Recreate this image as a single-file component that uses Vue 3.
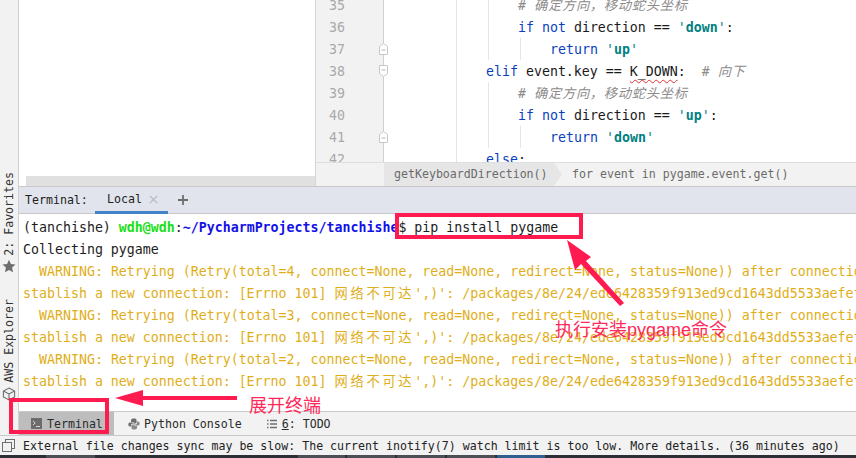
<script setup>
const warnTail = ", connect=None, read=None, redirect=None, status=None)) after connection broken by"
const pathTail = ",)': /packages/8e/24/ede6428359f913ed9cd1643dd5533aefef8e7cf4"
const retries = [4, 3, 2]
const numbers = [35, 36, 37, 38, 39, 40, 41, 42]
const foldUp = [37, 41]
const foldDown = [38]
const guides = [
  { cls: 'g1', top: 0, height: 162 },
  { cls: 'g2', top: 0, height: 60 },
  { cls: 'g2', top: 82, height: 66 },
  { cls: 'g3', top: 38, height: 22 },
  { cls: 'g3', top: 126, height: 22 }
]
const segments = [
  { w: 49, m: 46, blue: false },
  { w: 47, m: 203, blue: false },
  { w: 48, m: 2, blue: false },
  { w: 48, m: 2, blue: false },
  { w: 48, m: 2, blue: false },
  { w: 48, m: 2, blue: true }
]
</script>

<template>
  <div class="ide">
    <div class="work">
      <aside class="strip">
        <span class="vtext fav">2: Favorites</span>
        <svg class="star" width="14" height="14" viewBox="0 0 14 14"><path d="M7 .8l1.900 4.200 4.600.5-3.400 3.100.9 4.600L7 10.900l-4 2.300.9-4.600L.5 5.500l4.600-.5z" fill="#6e6e6e"/></svg>
        <span class="vtext aws">AWS Explorer</span>
        <svg class="cube" width="14" height="14" viewBox="0 0 14 14" fill="none" stroke="#6e6e6e" stroke-width="1.100"><path d="M7 1l5.600 3v6L7 13l-5.600-3V4zM1.400 4L7 7l5.600-3M7 7v6"/></svg>
      </aside>

      <main class="center">
        <section class="editor">
          <div class="blank"><div class="hscroll"></div></div>
          <div class="pane">
            <div class="rows">
              <div class="gutter">
                <div v-for="n in numbers" :key="n" class="num">
                  {{ n }}
                  <svg v-if="foldUp.includes(n)" class="fold" width="9" height="12" viewBox="0 0 9 12"><path d="M.5 11.500v-8l4-3 4 3v8z" fill="#fff" stroke="#c8c8c8"/><path d="M2.500 7h4" stroke="#b5b5b5"/></svg>
                  <svg v-if="foldDown.includes(n)" class="fold" width="9" height="12" viewBox="0 0 9 12"><path d="M.5.5v8l4 3 4-3v-8z" fill="#fff" stroke="#c8c8c8"/><path d="M2.500 5h4" stroke="#b5b5b5"/></svg>
                </div>
              </div>
              <div class="code">
                <span v-for="(g, i) in guides" :key="i" class="guide" :class="g.cls" :style="{ top: g.top + 'px', height: g.height + 'px' }"></span>
                <div class="line i16"><span class="com"># <span class="cjk">确定方向，移动蛇头坐标</span></span></div>
                <div class="line i16"><span class="kw">if not</span> direction == <span class="q">'</span><span class="str">down</span><span class="q">'</span>:</div>
                <div class="line i20"><span class="kw">return</span> <span class="q">'</span><span class="str">up</span><span class="q">'</span></div>
                <div class="line i12"><span class="kw">elif</span> event.key == <span class="squig">K_DOWN</span>:{{ '  ' }}<span class="com"># <span class="cjk">向下</span></span></div>
                <div class="line i16"><span class="com"># <span class="cjk">确定方向，移动蛇头坐标</span></span></div>
                <div class="line i16"><span class="kw">if not</span> direction == <span class="q">'</span><span class="str">up</span><span class="q">'</span>:</div>
                <div class="line i20"><span class="kw">return</span> <span class="q">'</span><span class="str">down</span><span class="q">'</span></div>
                <div class="line i12"><span class="kw">else</span>:</div>
              </div>
            </div>
            <div class="crumbs">
              <div class="crumb-gap"></div>
              <div class="crumb active">getKeyboardDirection()</div>
              <div class="crumb">for event in pygame.event.get()</div>
            </div>
          </div>
        </section>

        <section class="terminal">
          <header class="term-head">
            <span class="term-label">Terminal:</span>
            <span class="term-tab">Local
              <svg width="9" height="9" viewBox="0 0 9 9"><path d="M.8.8l7.400 7.400M8.200.8L.8 8.200" stroke="#b4b8be" stroke-width="1.200"/></svg>
            </span>
            <svg class="plus" width="10" height="10" viewBox="0 0 10 10"><path d="M5 0v10M0 5h10" stroke="#6e6e6e" stroke-width="1.800"/></svg>
          </header>
          <div class="term-body">
            <div class="tline">(tanchishe) <b class="user">wdh@wdh</b>:<b class="path">~/PycharmProjects/tanchishe</b>$ pip install pygame</div>
            <div class="tline">Collecting pygame</div>
            <template v-for="r in retries" :key="r">
              <div class="tline warn indent">WARNING: Retrying (Retry(total={{ r }}{{ warnTail }}</div>
              <div class="tline warn">stablish a new connection: [Errno 101] <span class="tcjk">网络不可达</span>'{{ pathTail }}</div>
            </template>
          </div>
        </section>

        <nav class="tools">
          <div class="tool on">
            <svg width="11" height="11" viewBox="0 0 11 11"><rect width="11" height="11" fill="#6c6c6c"/><path d="M2 3l2.200 2L2 7M5 8.500h4" stroke="#d8d8d8" fill="none"/></svg>
            Terminal
          </div>
          <div class="tool py">
            <svg width="12" height="12" viewBox="0 0 12 12"><path d="M6 .5c-2 0-3 .6-3 1.800V4h3.200v.6H1.900C.8 4.600.3 5.500.3 6.600S.9 8.600 2 8.600h1V7.200c0-1 .8-1.800 1.800-1.800h2.400c.8 0 1.400-.6 1.400-1.400V2.300C8.600 1.100 7.800.5 6 .5z" fill="#6e6e6e"/><path d="M6 11.500c2 0 3-.6 3-1.800V8H5.800v-.6h4.300c1.100 0 1.600-.9 1.600-2s-.6-2-1.700-2H9v1.400c0 1-.8 1.800-1.800 1.800H4.800c-.8 0-1.400.6-1.400 1.400v1.700c0 1.200.8 1.800 2.600 1.800z" fill="#8a8a8a"/></svg>
            Python Console
          </div>
          <div class="tool todo">
            <svg width="10" height="10" viewBox="0 0 10 10"><path d="M0 1.500h1.500M3 1.500h7M0 5h1.500M3 5h7M0 8.500h1.500M3 8.500h7" stroke="#6e6e6e" stroke-width="1.400"/></svg>
            <span><u>6</u>: TODO</span>
          </div>
        </nav>
      </main>
    </div>

    <footer class="status">
      <svg width="13" height="13" viewBox="0 0 13 13" fill="#f2f2f2" stroke="#6e6e6e"><rect x="3.500" y=".5" width="9" height="9"/><rect x=".5" y="3.500" width="9" height="9"/></svg>
      <span>External file changes sync may be slow: The current inotify(7) watch limit is too low. More details. (36 minutes ago)</span>
    </footer>
    <div class="taskbar">
      <i v-for="(s, i) in segments" :key="i" class="seg" :class="{ blue: s.blue }" :style="{ width: s.w + 'px', marginLeft: s.m + 'px' }"></i>
    </div>

    <div class="mark mark-cmd"></div>
    <div class="mark mark-tab"></div>
    <svg class="arrows" width="856" height="458" viewBox="0 0 856 458">
      <path d="M567 240l24 17-5 4 38 42-4 3-39-42-6 6z" fill="#ff1a4f"/>
      <path d="M115 398l28-8v6h94v4h-94v6z" fill="#ff1a4f"/>
    </svg>
    <span class="note note-cmd">执行安装pygame命令</span>
    <span class="note note-tab">展开终端</span>
  </div>
</template>

<style scoped>
.ide {
  position: relative;
  width: 856px;
  height: 458px;
  overflow: hidden;
  display: flex;
  flex-direction: column;
  background: #fff;
  font-family: "DejaVu Sans Mono", "Noto Sans CJK SC", monospace;
  color: #1d1d1d;
}
.work { flex: 1; min-height: 0; display: flex; }
.strip {
  width: 18px;
  flex: none;
  background: #f2f2f2;
  border-right: 1px solid #d0d0d0;
  display: flex;
  flex-direction: column;
  align-items: center;
  padding-top: 172px;
}
.vtext {
  writing-mode: vertical-rl;
  transform: rotate(180deg);
  font-size: 11.600px;
  line-height: 14px;
  color: #333;
  white-space: nowrap;
}
.star { margin-top: 3px; }
.aws { margin-top: 26px; }
.cube { margin-top: 4px; }
.center { flex: 1; min-width: 0; display: flex; flex-direction: column; }

.editor { height: 186px; flex: none; display: flex; }
.blank {
  width: 289px;
  flex: none;
  border-right: 1px solid #d6d6d6;
  display: flex;
  align-items: flex-end;
  padding-left: 7px;
}
.hscroll { flex: 1; height: 10px; background: #e0e0e0; }
.pane { flex: 1; min-width: 0; display: flex; flex-direction: column; }
.rows { height: 162px; flex: none; display: flex; overflow: hidden; }
.gutter {
  width: 68px;
  flex: none;
  background: #f2f2f2;
  border-right: 1px solid #d0d0d0;
  padding-left: 13px;
  box-sizing: border-box;
}
.num, .line {
  height: 22px;
  line-height: 22px;
  font-size: 13.280px;
  white-space: pre;
}
.num { position: relative; color: #a9a9a9; top: -5px; }
.fold { position: absolute; left: 50px; top: 4px; }
.code { position: relative; flex: 1; min-width: 0; padding-left: 6px; color: #1a1a1a; }
.line { position: relative; top: -5px; }
.i12 { padding-left: 96px; }
.i16 { padding-left: 128px; }
.i20 { padding-left: 160px; }
.guide { position: absolute; width: 1px; background: #e6e6e6; }
.g1 { left: 72px; }
.g2 { left: 104px; }
.g3 { left: 136px; }
.kw { color: #0a3fbf; }
.str { color: #00807f; font-weight: 600; }
.q { color: #00807f; }
.com { color: #8c8c8c; font-style: italic; }
.cjk { letter-spacing: 0.700px; }
.squig {
  text-decoration: underline wavy #e53333 1px;
  text-decoration-skip-ink: none;
  text-underline-offset: 3px;
}

.crumbs {
  height: 24px;
  flex: none;
  display: flex;
  background: #f2f2f2;
  border-top: 1px solid #dedede;
  box-sizing: border-box;
  font-size: 11.600px;
  line-height: 23px;
  color: #6b6b6b;
  white-space: nowrap;
}
.crumb-gap { width: 68px; flex: none; }
.crumb { padding-left: 10px; }
.crumb.active {
  width: 178px;
  box-sizing: border-box;
  background: #e6e6e6;
  clip-path: polygon(0 0, 170px 0, 178px 50%, 170px 100%, 0 100%);
}

.terminal { flex: 1; min-height: 0; display: flex; flex-direction: column; overflow: hidden; }
.term-head {
  height: 28px;
  flex: none;
  box-sizing: border-box;
  background: #e1e4ec;
  border-top: 1px solid #c9c9c9;
  border-bottom: 1px solid #c9c9c9;
  display: flex;
  align-items: center;
  padding-left: 6px;
  font-size: 11.600px;
  color: #222;
}
.term-label { width: 70px; flex: none; }
.term-tab {
  width: 73px;
  height: 27px;
  flex: none;
  box-sizing: border-box;
  padding-left: 12px;
  display: flex;
  align-items: center;
  gap: 7px;
  border-bottom: 3px solid #4083c9;
  margin-bottom: -1px;
}
.plus { margin-left: 10px; }
.term-body { flex: 1; min-height: 0; padding: 3px 0 0 4px; overflow: hidden; }
.tline {
  height: 22px;
  line-height: 22px;
  font-size: 13.280px;
  white-space: pre;
}
.indent { padding-left: 16px; }
.user { color: #18e018; }
.path { color: #1212e6; }
.warn { color: #dfae18; }
.tcjk { letter-spacing: 2.700px; }

.tools {
  height: 24px;
  flex: none;
  box-sizing: border-box;
  background: #f2f2f2;
  border-top: 1px solid #c9c9c9;
  display: flex;
  font-size: 11.600px;
  color: #2a2a2a;
}
.tool { display: flex; align-items: center; gap: 5px; white-space: nowrap; }
.tool.on { width: 95px; flex: none; padding-left: 12px; box-sizing: border-box; background: #bdbdbd; }
.tool.py { margin-left: 14px; gap: 4px; }
.tool.todo { margin-left: 25px; }

.status {
  height: 20px;
  flex: none;
  box-sizing: border-box;
  background: #f2f2f2;
  border-top: 1px solid #c9c9c9;
  display: flex;
  align-items: center;
  gap: 8px;
  padding-left: 2px;
  font-size: 11.600px;
  color: #222;
  white-space: nowrap;
}
.taskbar { height: 3px; flex: none; background: #2b3037; display: flex; }
.seg { display: block; height: 3px; background: #4a4f55; }
.seg.blue { background: #2f5f8f; }

.mark { position: absolute; box-sizing: border-box; border: 4px solid #ff1a4f; }
.mark-cmd { left: 395px; top: 213px; width: 188px; height: 26px; }
.mark-tab { left: 9px; top: 398px; width: 100px; height: 36px; }
.arrows { position: absolute; left: 0; top: 0; pointer-events: none; }
.note {
  position: absolute;
  font-family: "Liberation Sans", "Noto Sans CJK SC", sans-serif;
  font-size: 18px;
  line-height: 24px;
  color: #ff2a5a;
  white-space: nowrap;
}
.note-cmd { left: 555px; top: 318px; }
.note-tab { left: 249px; top: 394px; }
</style>
